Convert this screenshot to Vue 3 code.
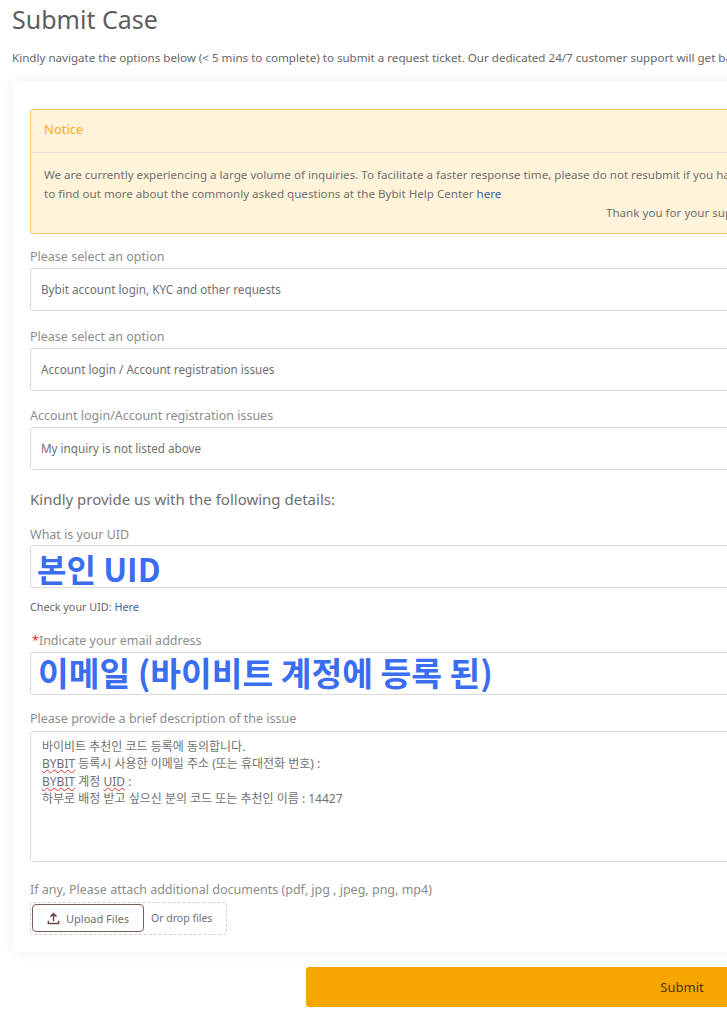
<template>
  <div class="page">
    <h1 class="title">Submit Case</h1>
    <p class="intro">
      Kindly navigate the options below (&lt; 5 mins to complete) to submit a request ticket. Our dedicated 24/7 customer support will get back to you shortly.
    </p>

    <div class="card">
      <div class="notice">
        <div class="notice-head">Notice</div>
        <div class="notice-body">
          <p>We are currently experiencing a large volume of inquiries. To facilitate a faster response time, please do not resubmit if you have already submitted a ticket.</p>
          <p>to find out more about the commonly asked questions at the Bybit Help Center <a class="link">here</a></p>
          <p class="thanks">Thank you for your support</p>
        </div>
      </div>

      <div v-for="item in selects" :key="item.value" class="select-field">
        <div class="label">{{ item.label }}</div>
        <div class="box">{{ item.value }}</div>
      </div>

      <h2 class="details">Kindly provide us with the following details:</h2>

      <div class="label uid-label">What is your UID</div>
      <div class="box big">본인 UID</div>
      <div class="hint">Check your UID: <a class="link">Here</a></div>

      <div class="label email-label"><span class="req">*</span>Indicate your email address</div>
      <div class="box big email">이메일 (바이비트 계정에 등록 된)</div>

      <div class="label desc-label">Please provide a brief description of the issue</div>
      <div class="area">
        <div>바이비트 추천인 코드 등록에 동의합니다.</div>
        <div><span class="typo">BYBIT</span> 등록시 사용한 이메일 주소 (또는 휴대전화 번호) :</div>
        <div><span class="typo">BYBIT</span> 계정 <span class="typo">UID</span> :</div>
        <div>하부로 배정 받고 싶으신 분의 코드 또는 추천인 이름 : 14427</div>
      </div>

      <div class="label attach-label">If any, Please attach additional documents (pdf, jpg , jpeg, png, mp4)</div>
      <div class="drop">
        <button class="upload">
          <svg width="13" height="13" viewBox="0 0 14 14" fill="none" stroke="#6b4a45" stroke-width="1.6">
            <path d="M7 10V2M3.8 5 7 1.8 10.2 5M1.5 9.5v3h11v-3" />
          </svg>
          Upload Files
        </button>
        <span class="drop-text">Or drop files</span>
      </div>
    </div>

    <div class="actions">
      <button class="submit">Submit</button>
    </div>
  </div>
</template>

<script setup>
const selects = [
  { label: "Please select an option", value: "Bybit account login, KYC and other requests" },
  { label: "Please select an option", value: "Account login / Account registration issues" },
  { label: "Account login/Account registration issues", value: "My inquiry is not listed above" },
];
</script>

<style>
html,
body {
  margin: 0;
  background: #fff;
  overflow: hidden;
}
</style>

<style scoped>
.page {
  width: 1070px;
  height: 1024px;
  box-sizing: border-box;
  padding: 0 0 0 12px;
  font-family: "Noto Sans", "Noto Sans CJK KR", sans-serif;
  color: #666;
}

.title {
  margin: 0;
  padding-top: 3px;
  font-size: 25px;
  line-height: 32px;
  font-weight: 400;
  color: #5e5e5e;
}

.intro {
  margin: 15px 0 0;
  font-size: 11.6px;
  line-height: 16px;
  color: #666;
  white-space: nowrap;
}

.card {
  margin-top: 15px;
  height: 871px;
  box-sizing: border-box;
  padding: 28px 0 0 18px;
  background: #fff;
  border-radius: 8px;
  box-shadow: 0 0 14px rgba(0, 0, 0, 0.07);
}

.notice {
  height: 125px;
  margin-bottom: 15px;
  box-sizing: border-box;
  background: #fff3da;
  border: 1px solid #f8c96a;
  border-radius: 3px;
}

.notice-head {
  height: 43px;
  box-sizing: border-box;
  padding: 0 13px;
  line-height: 38px;
  font-size: 13px;
  color: #fbaa2a;
  border-bottom: 1px solid #e8e0d2;
}

.notice-body {
  padding: 12px 13px 0;
  font-size: 11.6px;
  line-height: 19px;
  color: #707070;
  white-space: nowrap;
}

.notice-body p {
  margin: 0;
}

.thanks {
  padding-left: 562px;
}

.link {
  color: #3f5fa8;
}

.label {
  font-size: 12.5px;
  line-height: 16px;
  color: #8c8c8c;
}

.select-field {
  margin-bottom: 17.5px;
}

.select-field .label {
  margin-bottom: 3px;
}

.box {
  height: 43px;
  box-sizing: border-box;
  padding: 0 10px;
  line-height: 41px;
  font-size: 11.7px;
  color: #707070;
  background: #fff;
  border: 1px solid #dcdcdc;
  border-radius: 3px;
}

.details {
  margin: 18.5px 0 0;
  font-size: 15px;
  line-height: 20px;
  font-weight: 400;
  color: #6e6e6e;
}

.uid-label {
  margin-top: 18px;
  margin-bottom: 2px;
}

.big {
  padding: 0 6px;
  font-family: "Noto Sans CJK KR", sans-serif;
  font-size: 32px;
  font-weight: 700;
  line-height: 45px;
  color: #3a6df0;
}

.email {
  padding: 0 7px;
  font-size: 33.4px;
  line-height: 38px;
}

.hint {
  margin-top: 11px;
  font-size: 10.8px;
  line-height: 16px;
  color: #666;
}

.email-label {
  margin-top: 18px;
  margin-bottom: 3px;
}

.req {
  margin: 0 0 0 2px;
  color: #f5222d;
}

.desc-label {
  margin-top: 16px;
  margin-bottom: 4px;
}

.area {
  height: 131px;
  box-sizing: border-box;
  padding: 6px 11px;
  font-size: 12px;
  line-height: 17.5px;
  color: #707070;
  border: 1px solid #dcdcdc;
  border-radius: 3px;
}

.typo {
  text-decoration: underline wavy #e0312d 1px;
  text-underline-offset: 1px;
}

.attach-label {
  margin-top: 20px;
  margin-bottom: 4px;
}

.drop {
  width: 197px;
  height: 33px;
  box-sizing: border-box;
  padding: 1px;
  display: flex;
  align-items: center;
  gap: 7px;
  border: 1px dashed #d2d2d2;
  border-radius: 3px;
}

.upload {
  width: 112px;
  height: 28px;
  display: flex;
  align-items: center;
  justify-content: center;
  gap: 6px;
  padding: 0;
  font: inherit;
  font-size: 11px;
  color: #707070;
  background: #fff;
  border: 1px solid #7d5d58;
  border-radius: 4px;
}

.drop-text {
  font-size: 10.5px;
  color: #707070;
}

.actions {
  margin-top: 15px;
  padding-left: 294px;
}

.submit {
  display: block;
  width: 752px;
  height: 40px;
  padding: 0;
  font: inherit;
  font-size: 13px;
  color: #4d3300;
  background: #f7a600;
  border: none;
  border-radius: 3px;
}
</style>
